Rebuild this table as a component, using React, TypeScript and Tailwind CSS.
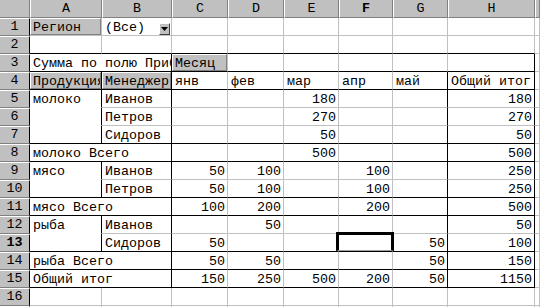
import React from 'react';

type Cell = { t?: string; span?: number; num?: boolean; btn?: boolean; drop?: boolean };

const COLS = ['A', 'B', 'C', 'D', 'E', 'F', 'G', 'H', ''];

// row number -> cells by column index (0 = A)
const DATA: Record<number, Record<number, Cell>> = {
  1: { 0: { t: 'Регион', btn: true }, 1: { t: '(Все)', drop: true } },
  3: { 0: { t: 'Сумма по полю Прибыль', span: 2 }, 2: { t: 'Месяц', btn: true } },
  4: {
    0: { t: 'Продукция', btn: true },
    1: { t: 'Менеджер', btn: true },
    2: { t: 'янв' },
    3: { t: 'фев' },
    4: { t: 'мар' },
    5: { t: 'апр' },
    6: { t: 'май' },
    7: { t: 'Общий итог' },
  },
  5: { 0: { t: 'молоко' }, 1: { t: 'Иванов' }, 4: { t: '180', num: true }, 7: { t: '180', num: true } },
  6: { 1: { t: 'Петров' }, 4: { t: '270', num: true }, 7: { t: '270', num: true } },
  7: { 1: { t: 'Сидоров' }, 4: { t: '50', num: true }, 7: { t: '50', num: true } },
  8: { 0: { t: 'молоко Всего', span: 2 }, 4: { t: '500', num: true }, 7: { t: '500', num: true } },
  9: {
    0: { t: 'мясо' },
    1: { t: 'Иванов' },
    2: { t: '50', num: true },
    3: { t: '100', num: true },
    5: { t: '100', num: true },
    7: { t: '250', num: true },
  },
  10: {
    1: { t: 'Петров' },
    2: { t: '50', num: true },
    3: { t: '100', num: true },
    5: { t: '100', num: true },
    7: { t: '250', num: true },
  },
  11: {
    0: { t: 'мясо Всего', span: 2 },
    2: { t: '100', num: true },
    3: { t: '200', num: true },
    5: { t: '200', num: true },
    7: { t: '500', num: true },
  },
  12: { 0: { t: 'рыба' }, 1: { t: 'Иванов' }, 3: { t: '50', num: true }, 7: { t: '50', num: true } },
  13: { 1: { t: 'Сидоров' }, 2: { t: '50', num: true }, 6: { t: '50', num: true }, 7: { t: '100', num: true } },
  14: {
    0: { t: 'рыба Всего', span: 2 },
    2: { t: '50', num: true },
    3: { t: '50', num: true },
    6: { t: '50', num: true },
    7: { t: '150', num: true },
  },
  15: {
    0: { t: 'Общий итог', span: 2 },
    2: { t: '150', num: true },
    3: { t: '250', num: true },
    4: { t: '500', num: true },
    5: { t: '200', num: true },
    6: { t: '50', num: true },
    7: { t: '1150', num: true },
  },
};

const rightColor = (row: number, col: number) => {
  if (row >= 3 && row <= 15) {
    if (col === 1 || col === 7) return 'border-r-black';
    if (col === 6 && row >= 4) return 'border-r-black';
    if (col === 0 && [4, 5, 6, 7, 9, 10, 12, 13].includes(row)) return 'border-r-black';
  }
  return 'border-r-[#c0c0c0]';
};

const bottomColor = (row: number, col: number) => {
  if (col <= 7) {
    if ([2, 3, 4, 7, 8, 10, 11, 13, 14, 15].includes(row)) return 'border-b-black';
    if (col === 0 && [5, 6, 9, 12].includes(row)) return 'border-b-white';
  }
  return 'border-b-[#c0c0c0]';
};

const DropArrow = () => (
  <div className="shrink-0 mr-[1px] w-[11px] h-[12px] bg-[#c0c0c0] border border-t-white border-l-white border-r-[#404040] border-b-[#404040] flex items-center justify-center">
    <svg width="7" height="4" viewBox="0 0 7 4">
      <polygon points="0,0 7,0 3.5,4" fill="black" />
    </svg>
  </div>
);

const Row = ({ row }: { row: number }) => {
  const cells = DATA[row] || {};
  const out: React.ReactNode[] = [];
  out.push(
    <div
      key="h"
      className={`bg-[#c0c0c0] border-t border-t-white border-r border-r-black border-b border-b-[#808080] flex items-center justify-center leading-none ${row === 13 ? 'font-bold' : ''}`}
    >
      {row}
    </div>
  );
  for (let c = 0; c < COLS.length; ) {
    const cell = cells[c];
    const span = cell?.span ?? 1;
    const isActive = row === 13 && c === 5;
    out.push(
      <div
        key={c}
        className={`relative flex items-end border-r border-b ${rightColor(row, c + span - 1)} ${bottomColor(row, c)} ${span === 2 ? 'col-span-2' : ''} ${isActive ? '' : 'overflow-hidden'}`}
      >
        {cell?.btn ? (
          <div className="flex-1 h-full bg-[#c0c0c0] border border-t-white border-l-white border-r-[#808080] border-b-[#808080] pl-[2px] pt-[1px] leading-[15px] whitespace-nowrap overflow-hidden">
            {cell.t}
          </div>
        ) : cell?.t ? (
          <div
            className={`flex-1 self-stretch whitespace-nowrap leading-[15px] pt-[2px] ${cell.num ? 'text-right pr-[2px]' : 'pl-[3px]'}`}
          >
            {cell.t}
          </div>
        ) : null}
        {cell?.drop && <DropArrow />}
        {isActive && (
          <div className="absolute -left-[3px] -top-[2px] w-[58px] h-[19px] border-t-[3px] border-l-[3px] border-r-[3px] border-b border-black border-b-[#a0a0a0] z-10" />
        )}
      </div>
    );
    c += span;
  }
  return <>{out}</>;
};

export default function App() {
  const rows = Array.from({ length: 17 }, (_, i) => i + 1);
  return (
    <div className="w-[540px] h-[307px] overflow-hidden bg-white text-black font-['Liberation_Mono','Courier_New',monospace] text-[13.33px]">
      <div className="grid grid-cols-[30px_72px_70px_56px_56px_55px_54px_55px_87px_5px] auto-rows-[18px]">
        <div className="bg-[#c0c0c0] border-r border-r-[#808080] border-b border-b-[#808080]" />
        {COLS.map((l) => (
          <div
            key={l || 'x'}
            className={`bg-[#c0c0c0] border-l border-l-white border-r border-r-[#808080] border-b border-b-[#808080] flex items-center justify-center leading-none ${l === 'F' ? 'font-bold' : ''}`}
          >
            {l}
          </div>
        ))}
        {rows.map((r) => (
          <Row key={r} row={r} />
        ))}
      </div>
    </div>
  );
}
